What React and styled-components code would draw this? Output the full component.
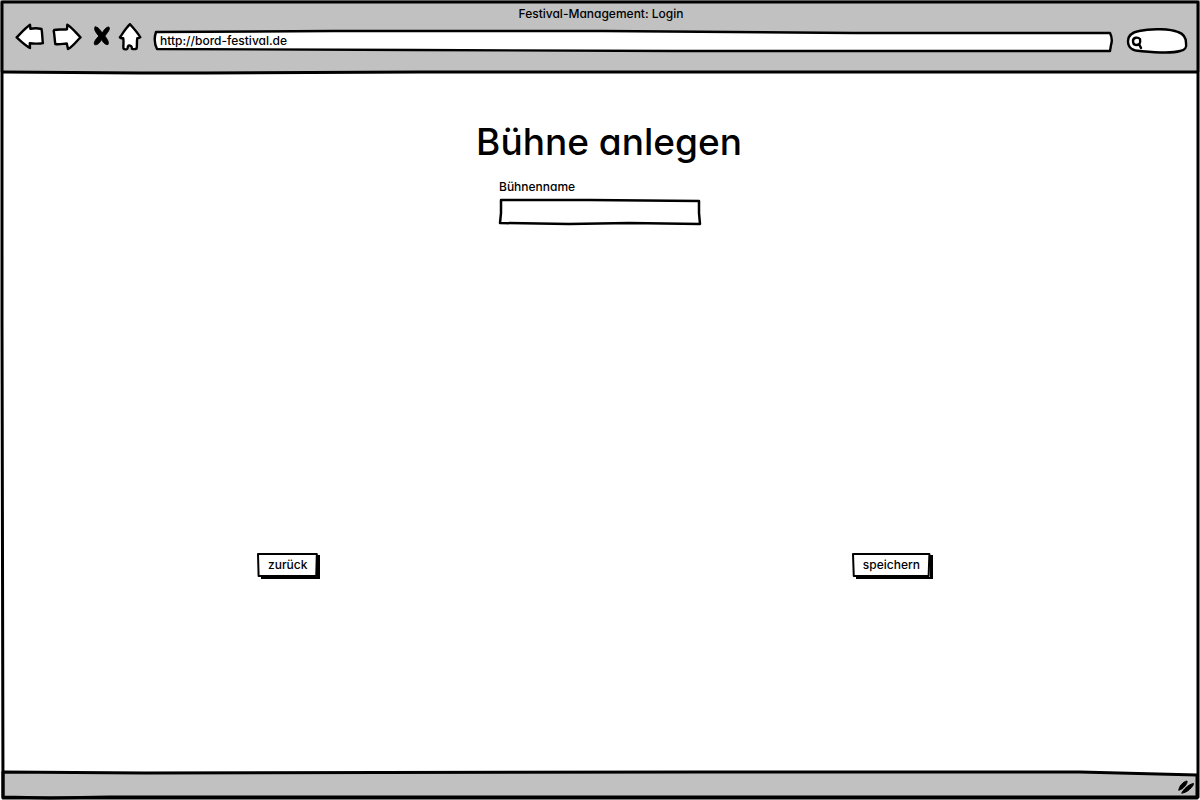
import React from "react";
import styled, { createGlobalStyle } from "styled-components";

const GlobalStyle = createGlobalStyle`
  *, *::before, *::after { box-sizing: border-box; }
  body {
    margin: 0;
    background: #fff;
    color: #000;
    font-family: Inter, "Noto Sans", sans-serif;
    font-size: 12px;
    font-weight: 500;
    line-height: 16px;
    font-feature-settings: "cv11";
  }
  button, input { font: inherit; font-feature-settings: inherit; color: inherit; }
`;

const BrowserWindow = styled.div`
  position: relative;
  display: flex;
  flex-direction: column;
  min-height: 100vh;
  background: #fff;
`;

const Outline = styled.svg`
  position: absolute;
  inset: 0;
  width: 100%;
  height: 100%;
  overflow: visible;
  pointer-events: none;
  z-index: ${(p) => (p.$over ? 1 : 0)};

  path {
    stroke: #000;
    stroke-width: ${(p) => p.$weight || 2}px;
    stroke-linejoin: round;
    stroke-linecap: round;
    vector-effect: non-scaling-stroke;
  }
`;

const Header = styled.header`
  position: relative;
  padding: 6px 12px 12px 14px;
  background: #c1c1c1;
`;

const WindowTitle = styled.div`
  text-align: center;
`;

const Toolbar = styled.div`
  display: flex;
  align-items: center;
  height: 38px;
`;

const Nav = styled.nav`
  display: flex;
  gap: 4px;
  margin-right: 12px;
`;

const IconButton = styled.button`
  display: block;
  padding: 0;
  border: 0;
  background: none;
  cursor: pointer;
`;

const Icon = styled.svg`
  position: relative;
  display: block;
  fill: #fff;
  stroke: #000;
  stroke-width: 2.4;
  stroke-linejoin: round;
  stroke-linecap: round;
`;

const SketchField = styled.div`
  position: relative;
  flex: ${(p) => p.$flex || "none"};
  width: ${(p) => p.$width || "auto"};
  height: ${(p) => p.$height};
`;

const TextInput = styled.input`
  position: relative;
  display: block;
  width: 100%;
  height: 100%;
  padding: 0 ${(p) => p.$inset || "6px"} 2px;
  border: 0;
  outline: 0;
  background: transparent;
`;

const SearchField = styled(SketchField)`
  margin-left: 14px;
`;

const Main = styled.main`
  flex: 1;
  padding-top: 46px;
`;

const Heading = styled.h1`
  margin: 0;
  padding-left: 18px;
  font-size: 37px;
  font-weight: 500;
  line-height: 48px;
  text-align: center;
`;

const Field = styled.div`
  width: 202px;
  margin: 13px auto 0;
`;

const Label = styled.label`
  display: block;
  margin-bottom: 4px;
`;

const Actions = styled.div`
  display: flex;
  justify-content: space-between;
  margin-top: 328px;
  padding: 0 22.5% 24px 21.5%;
`;

const ActionButton = styled.button`
  position: relative;
  height: 24px;
  padding: 0 10px;
  border: 0;
  background: #fff;
  box-shadow: 3px 2px 0 #000;
  cursor: pointer;
`;

const ButtonText = styled.span`
  position: relative;
`;

const Footer = styled.footer`
  position: relative;
  display: flex;
  justify-content: flex-end;
  align-items: center;
  height: 28px;
  padding: 2px 4px 0 0;
`;

function Action({ children }) {
  return (
    <ActionButton type="button">
      <Outline viewBox="0 0 100 24" preserveAspectRatio="none" fill="#fff" aria-hidden="true">
        <path d="M0 1 L50 1 L99 1 L98 23 L50 23 L1 23 Z" />
      </Outline>
      <ButtonText>{children}</ButtonText>
    </ActionButton>
  );
}

export default function App() {
  return (
    <>
      <GlobalStyle />
      <BrowserWindow>
        <Header>
          <WindowTitle>Festival-Management: Login</WindowTitle>
          <Toolbar>
            <Nav aria-label="Browser">
              <IconButton type="button" aria-label="Zurück">
                <Icon width="32" height="36" viewBox="14 23 32 36">
                  <path d="M16.6 37.3 C21 33 25 28.5 30 24.8 L30.4 28.9 C34 28 38 28.2 41.5 29 C42.5 33.5 42.2 39 42.9 43.2 C39 44.2 34 43.5 29.8 43.3 L30 48 C25 45.5 21 41.5 16.6 37.3 Z" />
                </Icon>
              </IconButton>
              <IconButton type="button" aria-label="Vorwärts">
                <Icon width="32" height="36" viewBox="50 23 32 36">
                  <path d="M54.2 30 C58 29 63 30 67 29.2 L67.3 24.8 C72.5 28 76 33 80.5 37.3 C76.5 41 73 46.5 68 49 L66.8 43.5 C63 43.6 59 45 55.3 44 C54.5 39 54.5 34 53.7 31 Z" />
                </Icon>
              </IconButton>
              <IconButton type="button" aria-label="Abbrechen">
                <Icon width="28" height="36" viewBox="86 23 28 36">
                  <path
                    fill="#000"
                    strokeWidth="1"
                    d="M95.2 27 C98 26.5 100 30 102.3 33 C104 30 106 27 108.9 27 C110.5 29.5 107 33.2 104.8 36 C106.6 38.5 109.5 42 108 44.5 C105 45 103 42 101.4 39.6 C100 42.5 97.5 45.5 94.6 44.6 C93.2 41.5 97 38.5 98.8 36 C97 33.5 93.2 30 95.2 27 Z"
                  />
                </Icon>
              </IconButton>
              <IconButton type="button" aria-label="Startseite">
                <Icon width="24" height="36" viewBox="118 23 24 36">
                  <path d="M130 24.2 C133.5 28 137.5 32.5 140.3 37.3 C139.5 38.2 138.5 38 137.3 38.2 C136.5 41.5 137.4 46 136.5 48.7 C135 49.3 133.5 49.2 132 48.8 C131.5 47.5 132 46.5 131 46 C130 45.5 128.5 45.5 128 46.2 C127.6 47.5 128 48.8 126.8 49.2 C125.5 49.5 124.3 49.5 123.5 48.5 C123 45 124 41.5 123.2 38.2 C122 38 120.5 38.8 119.9 37.3 C123 33 126 28 130 24.2 Z" />
                </Icon>
              </IconButton>
            </Nav>
            <SketchField $flex="1" $height="22px">
              <Outline viewBox="0 0 960 22" preserveAspectRatio="none" fill="#fff" $weight={2.4} aria-hidden="true">
                <path d="M2 2 L180 1 L450 1 L700 3 L957 3 Q960 9 958 15 L957 21 L520 21 L260 20 L3 19 Q-1 11 2 2 Z" />
              </Outline>
              <TextInput aria-label="Adresse" defaultValue="http://bord-festival.de" />
            </SketchField>
            <SearchField $width="61px" $height="26px">
              <Outline viewBox="0 0 61 26" preserveAspectRatio="none" fill="#fff" $weight={2.4} aria-hidden="true">
                <path d="M1 13 C1 6 7 4 12 3 C25 0 44 1 51 4 C57 6 59 10 59 15 C60 20 58 22 53 23 C43 26 24 24 13 23 C6 23 1 20 1 13 Z" />
                <path fill="none" d="M6 13 C6 9 11 9 13 11 C14 16 12 17 9 17 C7 17 6 15 6 13 M12 16 L14 20" />
              </Outline>
              <TextInput type="search" aria-label="Suche" $inset="16px" />
            </SearchField>
          </Toolbar>
          <Outline viewBox="0 0 1200 72" preserveAspectRatio="none" fill="none" $weight={3} aria-hidden="true">
            <path d="M3 72 L140 73 L205 73 L420 72 L1197 72" />
          </Outline>
        </Header>

        <Main>
          <Heading>Bühne anlegen</Heading>
          <Field>
            <Label htmlFor="stage-name">Bühnenname</Label>
            <SketchField $height="26px">
              <Outline viewBox="0 0 202 26" preserveAspectRatio="none" fill="#fff" $weight={2.5} aria-hidden="true">
                <path d="M2 1 L90 1 L200 2 L200 14 L201 25 L130 24 L70 25 L1 24 L2 14 Z" />
              </Outline>
              <TextInput id="stage-name" type="text" />
            </SketchField>
          </Field>
          <Actions>
            <Action>zurück</Action>
            <Action>speichern</Action>
          </Actions>
        </Main>

        <Footer>
          <Outline viewBox="0 0 1200 28" preserveAspectRatio="none" fill="#c1c1c1" $weight={3} aria-hidden="true">
            <path d="M3 0 L145 1 L700 0 L1080 0 L1197 3 L1197 26 L3 26 Z" />
          </Outline>
          <Icon width="20" height="16" viewBox="1176 779 20 16" aria-hidden="true">
            <path
              fill="#000"
              strokeWidth="1"
              d="M1179 790 C1178.5 787 1183 781.5 1187 781 C1188 783.5 1182.5 790 1179 790 Z M1182 793 C1182.500 790 1189 784 1193.500 783.500 C1194 786 1186.500 793.500 1182 793 Z"
            />
          </Icon>
        </Footer>

        <Outline viewBox="0 0 1200 800" preserveAspectRatio="none" fill="none" $weight={3} $over aria-hidden="true">
          <path d="M2 2 L600 2 L1198 2 L1198 300 L1198 797 L900 797 L600 797 L110 797 L50 798 L3 797 L2 320 Z" />
        </Outline>
      </BrowserWindow>
    </>
  );
}
